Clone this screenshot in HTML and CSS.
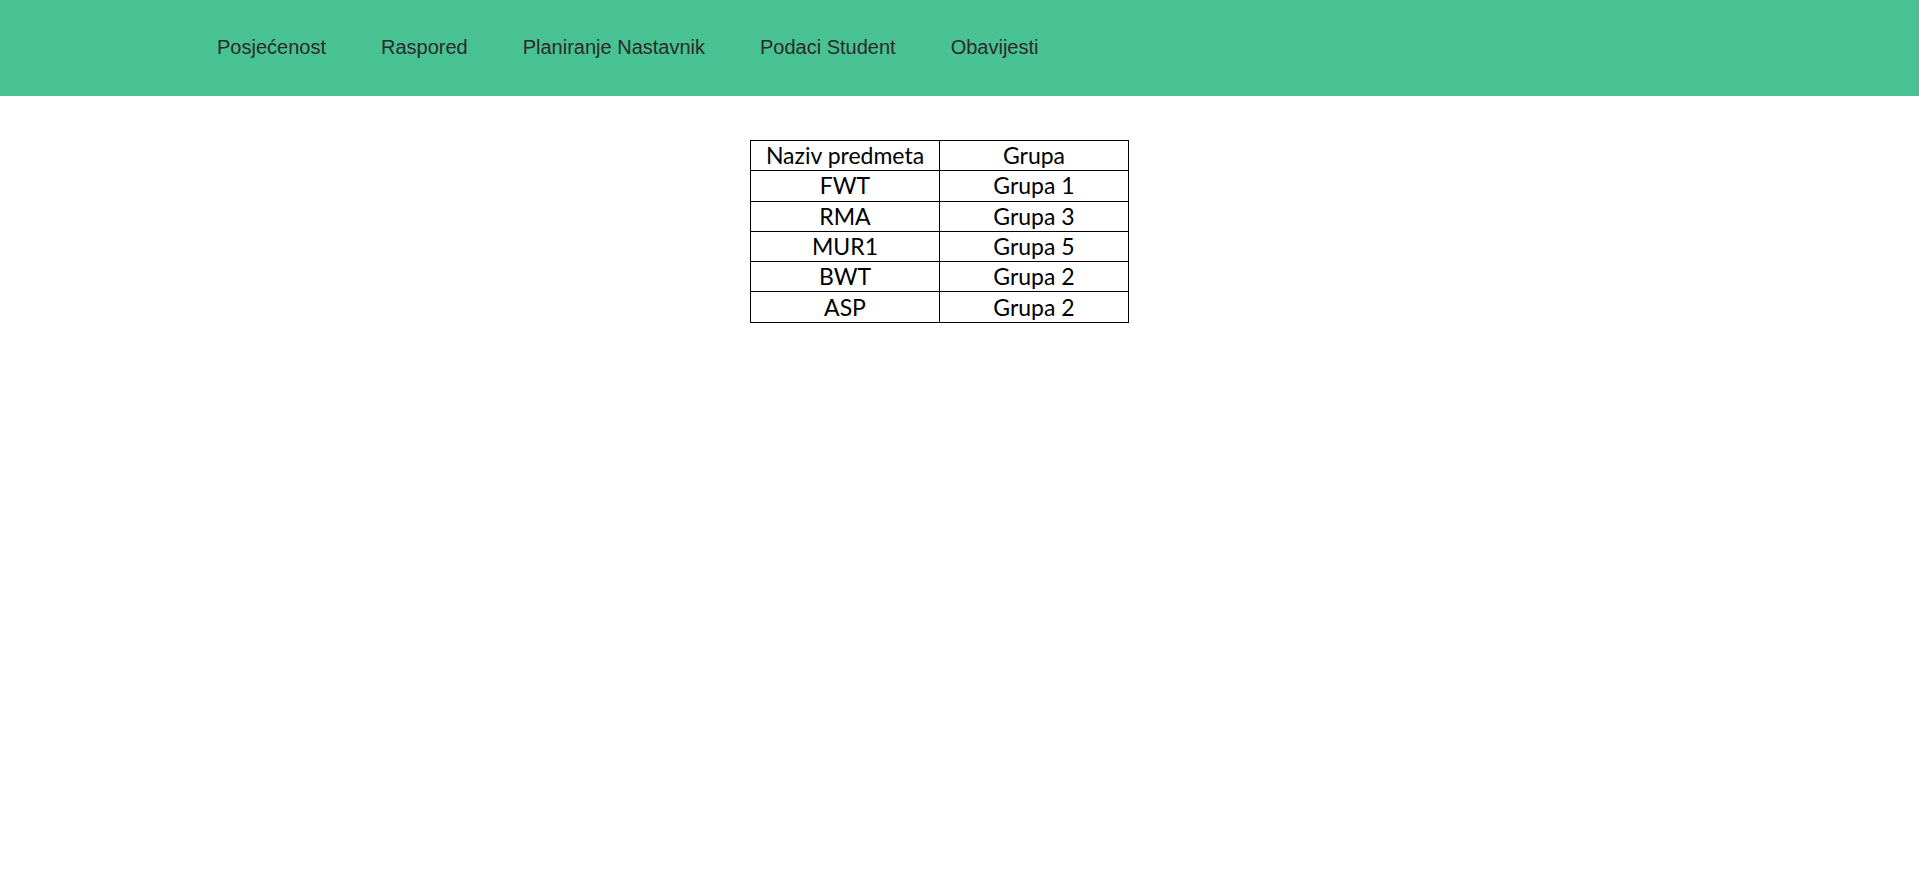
FILE: index.html
```html
<!DOCTYPE html>
<html lang="bs">
<head>
<meta charset="utf-8">
<title>Predmeti</title>
<link rel="stylesheet" href="styles.css">
</head>
<body>
<header class="topbar">
  <nav class="nav">
    <a class="nav-link" href="#">Posjećenost</a>
    <a class="nav-link" href="#">Raspored</a>
    <a class="nav-link" href="#">Planiranje Nastavnik</a>
    <a class="nav-link" href="#">Podaci Student</a>
    <a class="nav-link" href="#">Obavijesti</a>
  </nav>
</header>
<main class="content">
  <table class="subjects">
    <tr><th>Naziv predmeta</th><th>Grupa</th></tr>
    <tr><td>FWT</td><td>Grupa 1</td></tr>
    <tr><td>RMA</td><td>Grupa 3</td></tr>
    <tr><td>MUR1</td><td>Grupa 5</td></tr>
    <tr><td>BWT</td><td>Grupa 2</td></tr>
    <tr><td>ASP</td><td>Grupa 2</td></tr>
  </table>
</main>
</body>
</html>
```
FILE: styles.css
```css
html, body {
  margin: 0;
  padding: 0;
  background: #ffffff;
}

.topbar {
  background: #48c193;
  height: 96px;
  display: flex;
  align-items: center;
}

.nav {
  display: flex;
  padding-left: 189.5px;
  padding-bottom: 2px;
}

.nav-link {
  font-family: "Liberation Sans", Arial, sans-serif;
  font-size: 20px;
  color: #2b2b2b;
  text-decoration: none;
  padding: 0 27.5px;
}

.content {
  padding-top: 44px;
  padding-left: 750px;
}

.subjects {
  border-collapse: collapse;
  font-family: "Lato", "Open Sans", sans-serif;
  font-size: 23px;
  color: #000;
}

.subjects th,
.subjects td {
  border: 1px solid #000;
  width: 188px;
  height: 29.3px;
  padding: 0;
  text-align: center;
  font-weight: normal;
  line-height: 29px;
}
```
